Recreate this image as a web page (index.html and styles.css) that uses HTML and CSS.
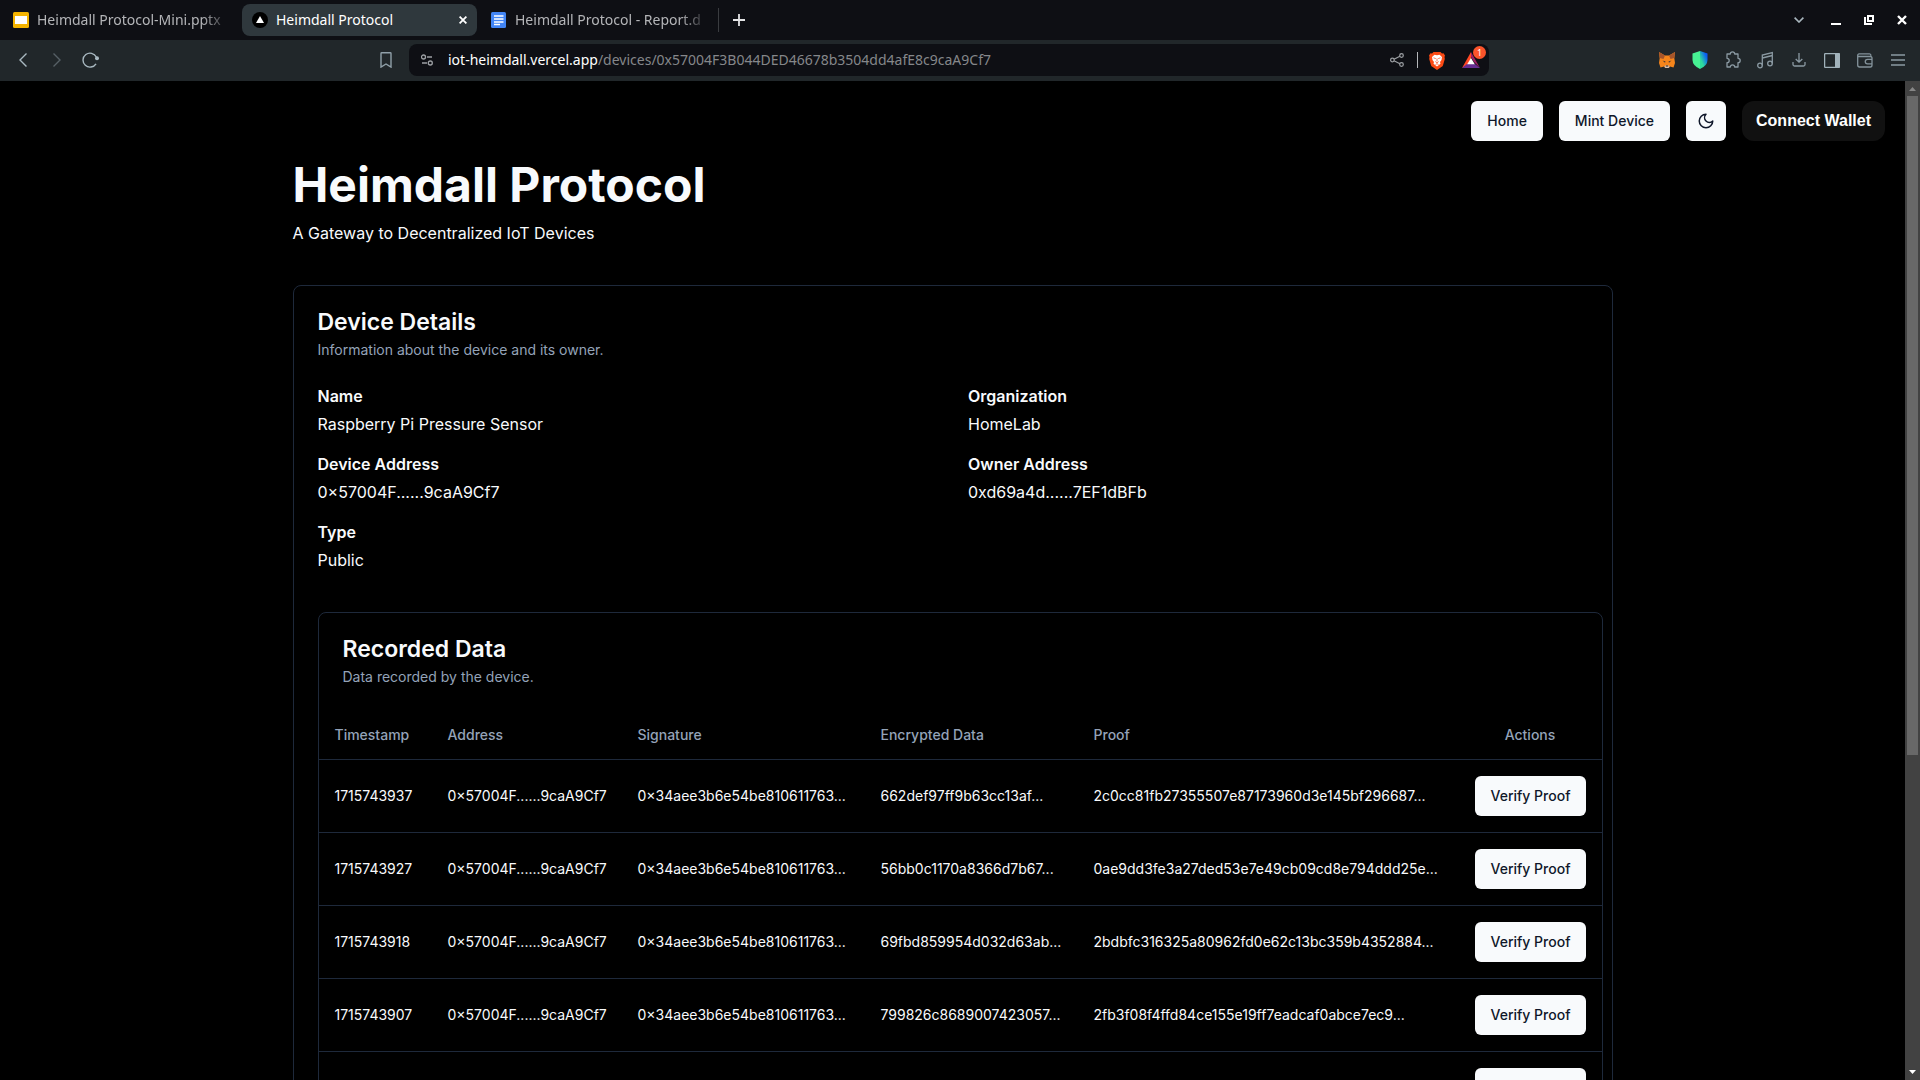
FILE: index.html
```html
<!DOCTYPE html>
<html lang="en">
<head>
<meta charset="utf-8">
<title>Heimdall Protocol</title>
<link rel="stylesheet" href="styles.css">
</head>
<body>
<div class="browser">
  <div class="tabbar">
    <div class="tab">
      <svg class="favicon" viewBox="0 0 16 16"><rect width="16" height="16" rx="1.5" fill="#f5b400"/><rect x="2" y="4" width="12" height="8" fill="#fff"/></svg>
      <span class="tab-title faded">Heimdall Protocol-Mini.pptx</span>
    </div>
    <div class="tab active">
      <svg class="favicon" viewBox="0 0 16 16"><circle cx="8" cy="8" r="8" fill="#000"/><path d="M8 4l4 7H4z" fill="#fff"/></svg>
      <span class="tab-title">Heimdall Protocol</span>
      <button class="icon-btn tab-close" aria-label="Close tab"><svg width="8" height="8" viewBox="0 0 8 8" stroke="#fff" stroke-width="1.8"><path d="M.6.6l6.8 6.8M7.4.6L.6 7.4"/></svg></button>
    </div>
    <div class="tab">
      <svg class="favicon" viewBox="0 0 16 16"><rect width="15" height="16" rx="1.5" fill="#4285f4"/><path d="M3 4h9.500M3 7h9.500M3 10h9.500M3 12.500h6" stroke="#fff" stroke-width="1.500"/></svg>
      <span class="tab-title faded">Heimdall Protocol - Report.d</span>
    </div>
    <span class="tab-sep"></span>
    <button class="icon-btn new-tab" aria-label="New tab"><svg width="12" height="12" viewBox="0 0 12 12" stroke="#e3e4e6" stroke-width="1.800"><path d="M6 0v12M0 6h12"/></svg></button>
    <div class="window-controls">
      <button class="icon-btn" aria-label="Search tabs"><svg width="10" height="6" viewBox="0 0 10 6" fill="none" stroke="#a9b6be" stroke-width="1.600"><path d="M.6.6L5 5 9.400.6"/></svg></button>
      <button class="icon-btn" aria-label="Minimize"><svg width="10" height="10" viewBox="0 0 10 10"><path d="M0 8h10v2H0z" fill="#fff"/></svg></button>
      <button class="icon-btn" aria-label="Restore"><svg width="10" height="10" viewBox="0 0 10 10" fill="none" stroke="#fff" stroke-width="2"><path d="M4 1h5v5H4zM1 2v7h7"/></svg></button>
      <button class="icon-btn" aria-label="Close window"><svg width="10" height="10" viewBox="0 0 10 10" stroke="#fff" stroke-width="2.400"><path d="M1 1l8 8M9 1L1 9"/></svg></button>
    </div>
  </div>
  <div class="toolbar">
    <div class="nav">
      <button class="icon-btn" aria-label="Back"><svg width="8" height="14" viewBox="0 0 8 14" fill="none" stroke="#a9b9c1" stroke-width="1.400"><path d="M7.500.5L1 7l6.500 6.500"/></svg></button>
      <button class="icon-btn" aria-label="Forward"><svg width="8" height="14" viewBox="0 0 8 14" fill="none" stroke="#566066" stroke-width="1.400"><path d="M.5.5L7 7 .5 13.500"/></svg></button>
      <button class="icon-btn" aria-label="Reload"><svg width="18" height="16" viewBox="0 0 18 16" fill="none" stroke="#a9b9c1" stroke-width="1.400"><path d="M14 11.800A7 7 0 1 1 14.300 5"/><circle cx="15" cy="6.200" r="2" fill="#a9b9c1" stroke="none"/></svg></button>
    </div>
    <div class="omnibox-wrap">
      <button class="icon-btn bookmark" aria-label="Bookmark"><svg width="12" height="16" viewBox="0 0 12 16" fill="none" stroke="#90a0a9" stroke-width="1.400"><path d="M1 1.500Q1 .8 1.700.8h8.600q.7 0 .7.700v13.600L6 12 1 15.100z"/></svg></button>
      <div class="omnibox">
        <svg class="tune" width="12" height="12" viewBox="0 0 12 12" fill="none" stroke="#9da0a4" stroke-width="1.300"><circle cx="2.500" cy="3" r="2"/><path d="M6 3h5M1 9h5"/><circle cx="9.300" cy="9" r="2"/></svg>
        <div class="url"><b>iot-heimdall.vercel.app</b>/devices/0x57004F3B044DED46678b3504dd4afE8c9caA9Cf7</div>
        <button class="icon-btn share" aria-label="Share"><svg width="14" height="14" viewBox="0 0 14 14" fill="none" stroke="#9da0a4" stroke-width="1.200"><circle cx="2.400" cy="7" r="1.800"/><circle cx="11.500" cy="2.500" r="1.800"/><circle cx="11.500" cy="11.500" r="1.800"/><path d="M4 6.200l5.900-2.900M4 7.800l5.900 2.900"/></svg></button>
        <span class="omni-sep"></span>
        <button class="icon-btn brave" aria-label="Brave Shields"><svg width="16" height="19" viewBox="0 0 16 19"><path d="M4.500 1h7l1.500 1.500 1.500-.2L16 4.500l-.5 1.500.3 2-1.800 6.200q-.3 1-1.300 1.600L8 19l-4.700-3.200Q2.300 15.200 2 14.200L.2 8l.3-2L0 4.500l1.500-2.200 1.500.2z" fill="#fb4a14"/><path d="M8 4.200L10.500 3.800 13 6l-.5 3-1.500 2 .5 1.800L8 15.500l-3.500-2.700L5 11 3.500 9 3 6l2.500-2.200z" fill="#fff"/><path d="M4.500 6.800l2.300.8M11.500 6.800l-2.300.8M8 7.500v3M6.300 10.500L8 12l1.700-1.500M6.500 13.500l1.500-.8 1.500.8" stroke="#fb542b" stroke-width=".8" fill="none"/></svg></button>
        <button class="icon-btn rewards" aria-label="Brave Rewards"><svg width="18" height="16" viewBox="0 0 18 16"><path d="M9 0L0 16l9-5z" fill="#ff4724"/><path d="M9 0l9 16-6-6-3-5z" fill="#9e1f63"/><path d="M0 16l5-4h8l5 4z" fill="#662d91"/><path d="M9 6l3.800 6.300H5.200z" fill="#fff"/></svg><span class="badge">1</span></button>
      </div>
    </div>
    <div class="extensions">
      <button class="icon-btn" aria-label="MetaMask"><svg width="18" height="18" viewBox="0 0 18 18"><path d="M1 1l6 3.500h4L17 1l-.7 6 .7 5-1.500 4.500L12 15.500 10.500 17h-3L6 15.500l-3.500 1L1 12l.7-5z" fill="#f6851b"/><path d="M1 1l6 3.500L5.500 8 1.700 7zM17 1l-6 3.500L12.500 8l3.800-1z" fill="#a5552b"/><path d="M4.500 9.500l3 1-.5 1.200zM13.500 9.500l-3 1 .5 1.200z" fill="#3a3437"/><path d="M7 14.500h4l.5 1.500-1 1h-3l-1-1z" fill="#d7c1b3"/><path d="M7.800 14.500h2.400v1H7.800z" fill="#222"/></svg></button>
      <button class="icon-btn" aria-label="Shield"><svg width="16" height="18" viewBox="0 0 16 18"><defs><linearGradient id="sh" x1="0" y1="1" x2="1" y2="0"><stop offset=".3" stop-color="#2fdc9c"/><stop offset=".8" stop-color="#0a5cf5"/></linearGradient></defs><path d="M8 0l7.500 2.500V9q0 5.500-7.500 9z" fill="url(#sh)"/><path d="M8 0L.5 2.500V9q0 5.500 7.500 9z" fill="#47f293"/></svg></button>
      <button class="icon-btn" aria-label="Extensions"><svg width="18" height="18" viewBox="0 0 18 18" fill="none" stroke="#8b9aa3" stroke-width="1.300" stroke-linejoin="round"><path d="M3 3h3.300a2.200 2.200 0 0 1 4.400 0H14v4.300a2.200 2.200 0 0 1 0 4.400V16h-3.300a2.200 2.200 0 0 0-4.400 0H3v-4.300a2.200 2.200 0 0 0 0-4.400z"/></svg></button>
      <button class="icon-btn" aria-label="Media"><svg width="17" height="18" viewBox="0 0 17 18" fill="none" stroke="#8b9aa3" stroke-width="1.300"><circle cx="3" cy="14.500" r="2.300"/><circle cx="13" cy="12.500" r="2.300"/><path d="M5.300 14.500V4l10-2.500v11M5.300 7l10-2.500"/></svg></button>
      <button class="icon-btn" aria-label="Downloads"><svg width="14" height="14" viewBox="0 0 14 14" fill="none" stroke="#8b9aa3" stroke-width="1.300"><path d="M7 0v9M3.700 6L7 9.200 10.300 6M1 9v2.500q0 1.500 1.500 1.500h9q1.500 0 1.500-1.500V9"/></svg></button>
      <button class="icon-btn" aria-label="Sidebar"><svg width="16" height="15" viewBox="0 0 16 15"><rect x=".6" y=".6" width="14.800" height="13.800" rx="1" fill="none" stroke="#a1b2ba" stroke-width="1.300"/><path d="M11 0h4.500v15H11z" fill="#a1b2ba"/></svg></button>
      <button class="icon-btn" aria-label="Wallet"><svg width="16" height="15" viewBox="0 0 16 15" fill="none" stroke="#84939b" stroke-width="1.300"><path d="M.7 2.500V12q0 2 2 2h10.600q1.700 0 1.700-2V5q0-1.500-1.500-1.500H2Q.7 3.500.7 2.300T2 .8h10.500q1.500 0 1.500 2"/><path d="M15 6.300h-4.500a2.200 2.200 0 0 0 0 4.500H15"/></svg></button>
      <button class="icon-btn" aria-label="Menu"><svg width="14" height="12" viewBox="0 0 14 12" stroke="#8b9aa3" stroke-width="1.300"><path d="M0 1h14M0 6h14M0 11h14"/></svg></button>
    </div>
  </div>

  <div class="viewport">
    <div class="page">
      <header class="site-nav">
        <button class="btn">Home</button>
        <button class="btn">Mint Device</button>
        <button class="btn btn-icon" aria-label="Toggle theme"><svg width="18" height="18" viewBox="0 0 24 24" fill="none" stroke="#0f172a" stroke-width="2" stroke-linecap="round" stroke-linejoin="round"><path d="M12 3a6 6 0 0 0 9 9 9 9 0 1 1-9-9Z"/></svg></button>
        <button class="btn-wallet">Connect Wallet</button>
      </header>
      <main class="container">
        <h1 class="site-title">Heimdall Protocol</h1>
        <p class="tagline">A Gateway to Decentralized IoT Devices</p>
        <section class="card">
          <div class="card-header">
            <h2 class="card-title">Device Details</h2>
            <p class="card-desc">Information about the device and its owner.</p>
          </div>
          <div class="card-content">
            <dl class="details">
              <div class="field"><dt>Name</dt><dd>Raspberry Pi Pressure Sensor</dd></div>
              <div class="field"><dt>Organization</dt><dd>HomeLab</dd></div>
              <div class="field"><dt>Device Address</dt><dd>0×57004F......9caA9Cf7</dd></div>
              <div class="field"><dt>Owner Address</dt><dd>0xd69a4d......7EF1dBFb</dd></div>
              <div class="field"><dt>Type</dt><dd>Public</dd></div>
            </dl>
            <section class="card">
              <div class="card-header">
                <h2 class="card-title">Recorded Data</h2>
                <p class="card-desc">Data recorded by the device.</p>
              </div>
              <table class="records">
                <colgroup><col class="c-time"><col class="c-addr"><col class="c-sig"><col class="c-data"><col><col class="c-act"></colgroup>
                <thead><tr><th>Timestamp</th><th>Address</th><th>Signature</th><th>Encrypted Data</th><th>Proof</th><th class="center">Actions</th></tr></thead>
                <tbody>
                  <tr><td>1715743937</td><td>0×57004F......9caA9Cf7</td><td>0×34aee3b6e54be810611763...</td><td>662def97ff9b63cc13af...</td><td>2c0cc81fb27355507e87173960d3e145bf296687...</td><td><button class="btn">Verify Proof</button></td></tr>
                  <tr><td>1715743927</td><td>0×57004F......9caA9Cf7</td><td>0×34aee3b6e54be810611763...</td><td>56bb0c1170a8366d7b67...</td><td>0ae9dd3fe3a27ded53e7e49cb09cd8e794ddd25e...</td><td><button class="btn">Verify Proof</button></td></tr>
                  <tr><td>1715743918</td><td>0×57004F......9caA9Cf7</td><td>0×34aee3b6e54be810611763...</td><td>69fbd859954d032d63ab...</td><td>2bdbfc316325a80962fd0e62c13bc359b4352884...</td><td><button class="btn">Verify Proof</button></td></tr>
                  <tr><td>1715743907</td><td>0×57004F......9caA9Cf7</td><td>0×34aee3b6e54be810611763...</td><td>799826c8689007423057...</td><td>2fb3f08f4ffd84ce155e19ff7eadcaf0abce7ec9...</td><td><button class="btn">Verify Proof</button></td></tr>
                  <tr><td></td><td></td><td></td><td></td><td></td><td><button class="btn">Verify Proof</button></td></tr>
                </tbody>
              </table>
            </section>
          </div>
        </section>
      </main>
    </div>
    <div class="scrollbar">
      <svg class="sb-arrow" viewBox="0 0 15 15"><path d="M4 10h7L7.500 6z" fill="#868686"/></svg>
      <div class="sb-track"><div class="sb-thumb"></div></div>
      <svg class="sb-arrow" viewBox="0 0 15 15"><path d="M4 5h7L7.500 9z" fill="#fff"/></svg>
    </div>
  </div>
</div>
</body>
</html>
```
FILE: styles.css
```css
* { box-sizing: border-box; }
body, h1, h2, p, dl, dd { margin: 0; }
button { font: inherit; border: 0; padding: 0; cursor: pointer; }
svg { display: block; flex: none; }

body { background: #000; color: #f8fafc; font: 16px/24px Inter, sans-serif; }
.browser { height: 100vh; display: flex; flex-direction: column; overflow: hidden; }
.icon-btn { background: none; display: flex; align-items: center; justify-content: center; flex: none; }

/* Tab strip */
.tabbar { height: 40px; flex: none; display: flex; align-items: center; background: #0e0f14; font: 14px/20px "Noto Sans", sans-serif; color: #b4b5b8; }
.tab { width: 235px; height: 32px; padding: 0 7px 0 10px; display: flex; align-items: center; gap: 8px; border-radius: 8px; }
.tab:first-child { margin-left: 3px; margin-right: 4px; }
.tab.active { background: #2f383d; color: #fff; }
.tab + .tab.active { margin-right: 4px; }
.favicon { width: 16px; height: 16px; }
.tab-title { flex: 1; min-width: 0; overflow: hidden; white-space: nowrap; }
.faded { -webkit-mask-image: linear-gradient(to right, #000 85%, transparent); mask-image: linear-gradient(to right, #000 85%, transparent); }
.tab-close { width: 14px; height: 14px; }
.tab-sep { width: 1px; height: 24px; background: #3a3c40; margin-left: 2px; }
.new-tab { width: 24px; height: 24px; margin-left: 8px; }
.window-controls { margin-left: auto; display: flex; padding-right: 2px; }
.window-controls .icon-btn { width: 33px; height: 24px; }
.window-controls .icon-btn:first-child { margin-right: 4px; }

/* Toolbar */
.toolbar { height: 41px; flex: none; display: flex; align-items: center; padding-bottom: 1px; background: #21272a; }
.nav { display: flex; padding-left: 6px; }
.nav .icon-btn { width: 34px; height: 32px; }
.omnibox-wrap { flex: 1; display: flex; align-items: center; padding-left: 261px; padding-right: 161px; }
.bookmark { width: 34px; height: 32px; margin-right: 6px; }
.omnibox { flex: 1; height: 32px; display: flex; align-items: center; padding: 0 9px 0 12px; border-radius: 8px; background: #0e0f14; font: 14px/20px "Noto Sans", sans-serif; color: #85878a; }
.tune { margin-right: 15px; }
.url { flex: 1; white-space: nowrap; }
.url b { font-weight: 400; color: #fff; }
.omni-sep { width: 1px; height: 16px; background: #b5b7ba; margin: 0 11px 0 13px; }
.brave { margin-right: 17px; }
.rewards { position: relative; width: 18px; height: 20px; }
.badge { position: absolute; left: 11px; top: -4px; width: 13px; height: 13px; border-radius: 7px; background: #fb542b; color: #fff; font: 9px/13px "Noto Sans", sans-serif; text-align: center; }
.extensions { display: flex; padding-right: 6px; }
.extensions .icon-btn { width: 33px; height: 32px; }

/* Page area */
.viewport { flex: 1; min-height: 0; display: flex; }
.page { flex: 1; min-width: 0; overflow: hidden; }
.scrollbar { width: 15px; flex: none; display: flex; flex-direction: column; background: #424242; }
.sb-arrow { width: 15px; height: 15px; }
.sb-track { flex: 1; padding: 0 2px; }
.sb-thumb { height: 68%; background: #686868; }

.site-nav { display: flex; justify-content: flex-end; gap: 16px; padding: 20px; }
.btn { height: 40px; padding: 0 16px; border-radius: 6px; background: #f8fafc; color: #0f172a; font-size: 14px; line-height: 20px; font-weight: 500; white-space: nowrap; }
.btn-icon { width: 40px; display: flex; align-items: center; justify-content: center; padding: 0; }
.btn-wallet { height: 40px; padding: 0 14px; border-radius: 12px; background: #111; color: #fff; font: bold 16px/20px "Liberation Sans", sans-serif; }

.container { max-width: 1320px; margin: 0 auto; }
.site-title { font-size: 48px; line-height: 48px; font-weight: 700; }
.tagline { margin: 12px 0 40px; }
.card { border: 1px solid #1e293b; border-radius: 8px; }
.card-header { padding: 24px; display: flex; flex-direction: column; gap: 6px; }
.card-title { font-size: 23px; line-height: 24px; font-weight: 600; }
.card-desc { font-size: 14px; line-height: 20px; color: #94a3b8; }
.card-content { padding: 0 9px 24px 24px; }
.details { display: grid; grid-template-columns: 1fr 1fr; gap: 16px; margin-bottom: 40px; }
.field { display: flex; flex-direction: column; gap: 4px; }
.field dt { font-weight: 600; }

.records { width: 100%; table-layout: fixed; border-collapse: separate; border-spacing: 0; font-size: 14px; line-height: 20px; white-space: nowrap; }
.records th { height: 49px; padding: 0 16px; text-align: left; font-weight: 500; color: #94a3b8; border-bottom: 1px solid #1e293b; }
.records td { height: 73px; padding: 16px; border-bottom: 1px solid #1e293b; }
.records .center { text-align: center; }
.c-time { width: 113px; }
.c-addr { width: 190px; }
.c-sig { width: 243px; }
.c-data { width: 213px; }
.c-act { width: 143px; }
```
